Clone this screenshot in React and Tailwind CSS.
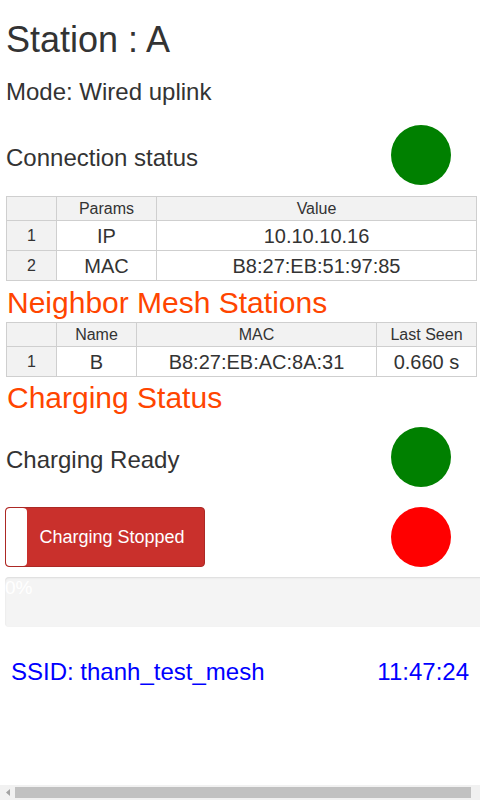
export default function App() {
  const params = [
    ['1', 'IP', '10.10.10.16'],
    ['2', 'MAC', 'B8:27:EB:51:97:85'],
  ]

  const neighbors = [['1', 'B', 'B8:27:EB:AC:8A:31', '0.660 s']]

  const cell = 'border border-[#cfcfcf] text-center p-0'
  const headCell = cell + ' font-normal text-[16px] leading-[20px]'
  const numCell = cell + ' bg-[#f2f2f2] text-[16px] leading-[20px]'
  const dataCell = cell + ' text-[20px] leading-[24px]'

  return (
    <div className="h-[800px] overflow-hidden flex flex-col bg-white text-[#333] font-['Liberation_Sans',Arial,sans-serif]">
      {/* Station header */}
      <h1 className="pt-[20px] pl-[6px] text-[36px] leading-[40px]">Station : A</h1>
      <div className="mt-[18px] pl-[6px] text-[24px] leading-[28px]">Mode: Wired uplink</div>

      {/* Connection status */}
      <div className="mt-[19px] flex items-start justify-between pl-[6px] pr-[29px]">
        <div className="mt-[19px] text-[24px] leading-[28px]">Connection status</div>
        <div className="w-[60px] h-[60px] rounded-full bg-[#008000]" />
      </div>

      {/* Params table */}
      <table className="mt-[11px] ml-[6px] w-[471px] border-collapse table-fixed">
        <colgroup>
          <col className="w-[50px]" />
          <col className="w-[100px]" />
          <col />
        </colgroup>
        <thead>
          <tr className="h-[24px] bg-[#f2f2f2]">
            <th className={headCell}></th>
            <th className={headCell}>Params</th>
            <th className={headCell}>Value</th>
          </tr>
        </thead>
        <tbody>
          {params.map(([n, k, v]) => (
            <tr key={n} className="h-[30px]">
              <td className={numCell}>{n}</td>
              <td className={dataCell}>{k}</td>
              <td className={dataCell}>{v}</td>
            </tr>
          ))}
        </tbody>
      </table>

      {/* Neighbors */}
      <h2 className="mt-[5px] pl-[7px] text-[30px] leading-[34px] text-[#ff4500]">Neighbor Mesh Stations</h2>
      <table className="mt-[2px] ml-[6px] w-[471px] border-collapse table-fixed">
        <colgroup>
          <col className="w-[50px]" />
          <col className="w-[80px]" />
          <col className="w-[240px]" />
          <col />
        </colgroup>
        <thead>
          <tr className="h-[24px] bg-[#f2f2f2]">
            <th className={headCell}></th>
            <th className={headCell}>Name</th>
            <th className={headCell}>MAC</th>
            <th className={headCell}>Last Seen</th>
          </tr>
        </thead>
        <tbody>
          {neighbors.map(([n, name, mac, seen]) => (
            <tr key={n} className="h-[30px]">
              <td className={numCell}>{n}</td>
              <td className={dataCell}>{name}</td>
              <td className={dataCell}>{mac}</td>
              <td className={dataCell}>{seen}</td>
            </tr>
          ))}
        </tbody>
      </table>

      {/* Charging */}
      <h2 className="mt-[4px] pl-[7px] text-[30px] leading-[34px] text-[#ff4500]">Charging Status</h2>

      <div className="mt-[12px] flex items-start justify-between pl-[6px] pr-[29px]">
        <div className="mt-[19px] text-[24px] leading-[28px]">Charging Ready</div>
        <div className="w-[60px] h-[60px] rounded-full bg-[#008000]" />
      </div>

      <div className="mt-[20px] flex items-center justify-between pl-[5px] pr-[29px]">
        <button className="relative w-[200px] h-[60px] rounded-[4px] border border-[#ac2925] bg-[#c9302c] text-white text-[18px] flex items-center justify-center pl-[14px]">
          <span className="absolute left-0 top-0 bottom-0 w-[21px] rounded-[4px] bg-white" />
          Charging Stopped
        </button>
        <div className="w-[60px] h-[60px] rounded-full bg-[#ff0000]" />
      </div>

      {/* Progress */}
      <div className="mt-[10px] ml-[5px] w-[490px] h-[50px] shrink-0 rounded-[4px] bg-[#f4f4f4] shadow-[inset_0_1px_2px_rgba(0,0,0,0.1)]">
        <div className="text-white text-[19px] leading-[20px] pt-[1px]">0%</div>
      </div>

      {/* Footer */}
      <div className="mt-[31px] flex items-center justify-between px-[11px] text-[24px] leading-[28px] text-[#0000ff]">
        <span>SSID: thanh_test_mesh</span>
        <span>11:47:24</span>
      </div>

      {/* Horizontal scrollbar */}
      <div className="mt-auto h-[15px] shrink-0 flex items-center bg-[#f1f1f1]">
        <div className="w-[15px] flex justify-center">
          <svg viewBox="0 0 4 7" className="w-[4px] h-[7px]">
            <polygon points="4,0 4,7 0,3.5" fill="#a3a3a3" />
          </svg>
        </div>
        <div className="w-[456px] h-[11px] bg-[#c1c1c1]" />
      </div>
    </div>
  )
}
